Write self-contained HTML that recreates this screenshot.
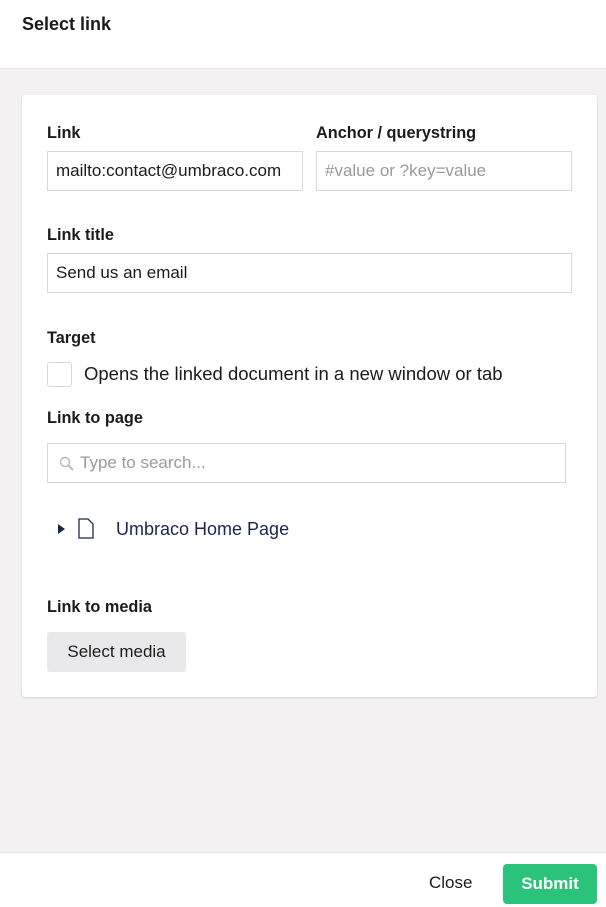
<!DOCTYPE html>
<html><head><style>
*{box-sizing:border-box;margin:0;padding:0}
body{width:606px;height:907px;background:#f3f1f1;font-family:"Liberation Sans",sans-serif;color:#1b1b1b;position:relative;overflow:hidden}
.hdr{position:absolute;left:0;top:0;width:606px;height:69px;background:#fff;border-bottom:1px solid #e6e4e4}
.hdr h1{position:absolute;left:22px;top:14px;font-size:18px;font-weight:bold}
.card{position:absolute;left:22px;top:95px;width:575px;height:602px;background:#fff;border-radius:3px;box-shadow:0 1px 2px rgba(0,0,0,.15)}
.lbl{position:absolute;font-size:16.3px;font-weight:bold;margin-top:2px}
.inp{position:absolute;height:40px;border:1px solid #d8d7d9;font-size:17px;padding:9px 8px;white-space:nowrap;overflow:hidden;color:#1b1b1b}
.ph{color:#9a9a9a}
.ftr{position:absolute;left:0;top:852px;width:606px;height:55px;background:#fff;border-top:1px solid #e6e4e4}
</style></head><body>
<div class="hdr"><h1>Select link</h1></div>
<div class="card">
<div class="lbl" style="left:25px;top:27px">Link</div>
<div class="lbl" style="left:294px;top:27px">Anchor / querystring</div>
<div class="inp" style="left:25px;top:56px;width:256px">mailto:contact@umbraco.com</div>
<div class="inp ph" style="left:294px;top:56px;width:256px">#value or ?key=value</div>
<div class="lbl" style="left:25px;top:129px">Link title</div>
<div class="inp" style="left:25px;top:158px;width:525px">Send us an email</div>
<div class="lbl" style="left:25px;top:232px">Target</div>
<div style="position:absolute;left:25px;top:267px;width:25px;height:25px;border:1px solid #d8d7d9;border-radius:3px"></div>
<div style="position:absolute;left:62px;top:268px;font-size:18.5px">Opens the linked document in a new window or tab</div>
<div class="lbl" style="left:25px;top:312px">Link to page</div>
<div class="inp ph" style="left:25px;top:348px;width:519px;padding-left:32px">Type to search...
<svg style="position:absolute;left:11px;top:12px" width="16" height="16" viewBox="0 0 16 16"><circle cx="6" cy="6" r="4.5" fill="none" stroke="#bbb" stroke-width="1.5"/><path d="M9.5 9.5L14 14" stroke="#bbb" stroke-width="2"/></svg></div>
<svg style="position:absolute;left:36px;top:429px" width="8" height="10"><path d="M0 0L7 5L0 10Z" fill="#1b264f"/></svg>
<svg style="position:absolute;left:56px;top:423px" width="16" height="21"><path d="M1 1H10L15 6V20H1Z" fill="none" stroke="#1b264f" stroke-width="1.3"/></svg>
<div style="position:absolute;left:94px;top:424px;font-size:18px;color:#1b264f">Umbraco Home Page</div>
<div class="lbl" style="left:25px;top:501px">Link to media</div>
<div style="position:absolute;left:25px;top:537px;width:139px;height:40px;background:#e9e9eb;border-radius:3px;font-size:17px;text-align:center;line-height:40px">Select media</div>
</div>
<div class="ftr">
<div style="position:absolute;left:429px;top:20px;font-size:17px">Close</div>
<div style="position:absolute;left:503px;top:11px;width:94px;height:40px;background:#2bc37c;border-radius:4px;color:#fff;font-weight:bold;font-size:17px;text-align:center;line-height:40px">Submit</div>
</div>
</body></html>
